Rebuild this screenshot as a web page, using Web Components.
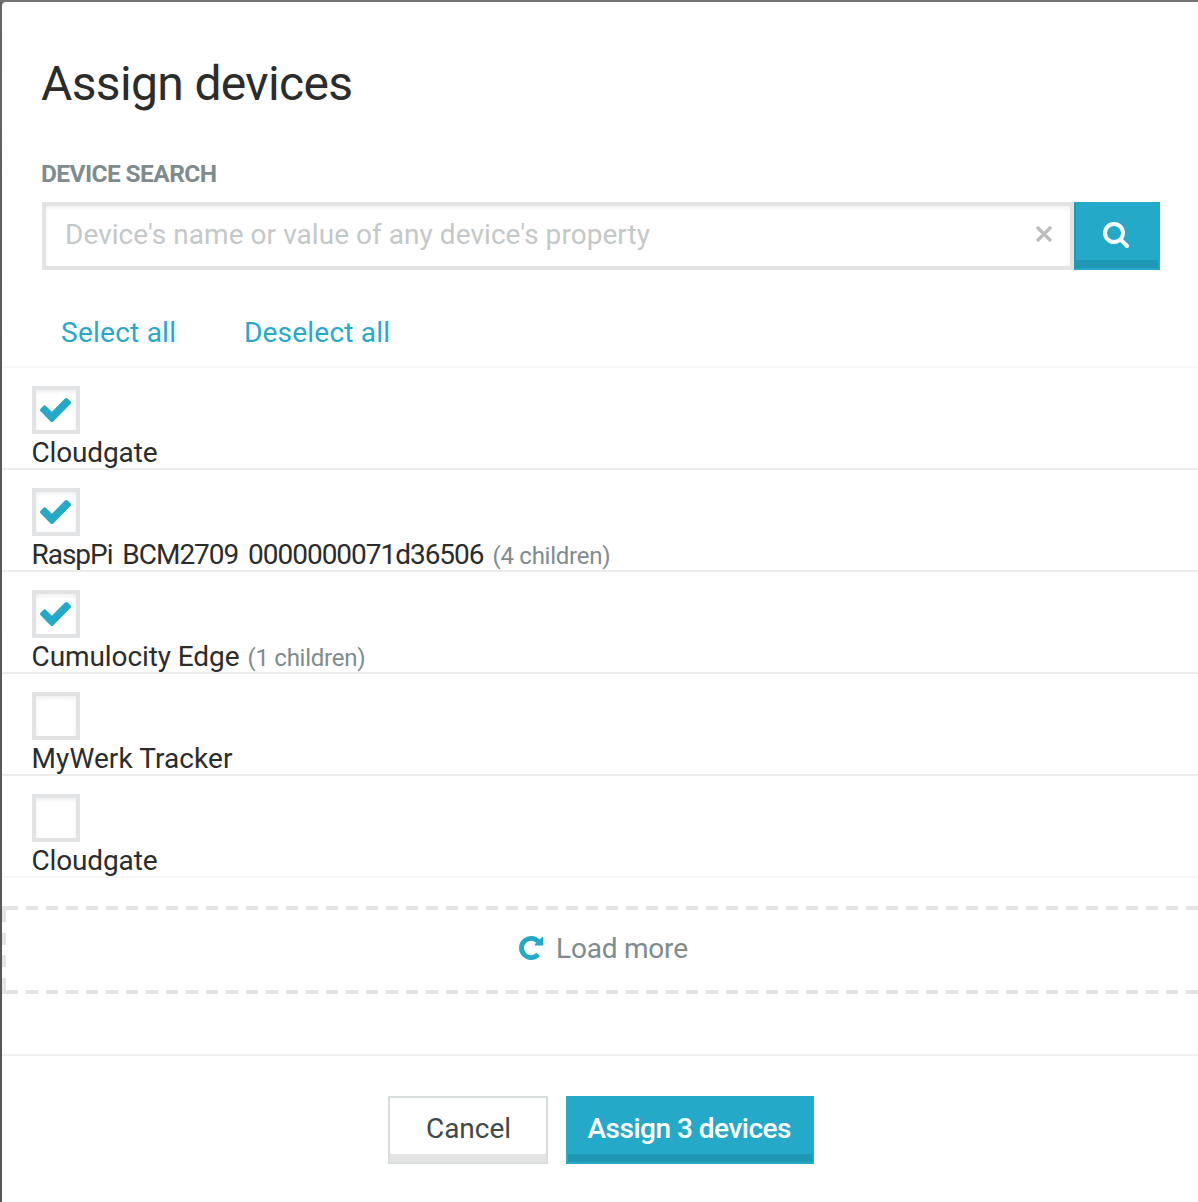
<!DOCTYPE html>
<html lang="en">
<head>
<meta charset="utf-8">
<title>Assign devices</title>
<style>
html, body { margin: 0; height: 100%; overflow: hidden; }
body { background: linear-gradient(#757475, #757475) 0 0 / 100% 2px no-repeat, linear-gradient(#666, #5a5a5b 30%, #565657); font-family: Roboto, "Liberation Sans", sans-serif; color: #2c2c2c; --brand: #24aac8; --brand-dark: #1f98b5; }
</style>
</head>
<body>
<assign-dialog></assign-dialog>
<script>
class BaseElement extends HTMLElement {
  constructor() {
    super();
    this.attachShadow({ mode: 'open' }).innerHTML = this.template();
  }
}

/* Single line of text tracked out to the width given in `w`. */
customElements.define('ui-text', class extends BaseElement {
  template() {
    return `<style>:host{display:inline-block;white-space:pre;line-height:34px;font-size:28px}span{display:inline-block}</style><span><slot></slot></span>`;
  }
  connectedCallback() {
    const span = this.shadowRoot.querySelector('span');
    const width = Number(this.getAttribute('w'));
    const gap = (width - span.getBoundingClientRect().width) / (this.textContent.length - 1);
    span.style.letterSpacing = gap + 'px';
    span.style.marginRight = -gap + 'px';
  }
});

customElements.define('search-field', class extends BaseElement {
  template() {
    return `<style>
      :host{display:flex;height:68px;width:1118px}
      .input{box-sizing:border-box;width:1032px;border:4px solid #e1e3e5;display:flex;align-items:center;justify-content:space-between;padding:0 17px 0 19px;box-shadow:inset 0 2px 4px #0000000f;color:#c5c8c8}
      ui-text{padding-bottom:2px}
      .clear{width:18px;height:18px;margin-top:-4px}
      .go{box-sizing:border-box;width:86px;background:var(--brand);border:2px solid var(--brand);border-left-color:var(--brand-dark);box-shadow:inset 0 -8px var(--brand-dark);display:flex;justify-content:center;padding-top:18px}
      .go svg{width:26px;height:26px;margin-right:2px}
    </style>
    <div class="input"><ui-text w="585">Device's name or value of any device's property</ui-text>
      <svg class="clear" viewBox="0 0 18 18"><path d="M2 2 16 16M16 2 2 16" stroke="#bcbcbc" stroke-width="3.3"/></svg></div>
    <div class="go"><svg viewBox="64 128 1664 1664"><path fill="#fff" d="M1216 832q0-185-131.5-316.5t-316.5-131.5-316.5 131.5-131.5 316.5 131.5 316.5 316.5 131.5 316.5-131.5 131.5-316.5zm512 832q0 52-38 90t-90 38q-54 0-90-38l-343-342q-179 124-399 124-143 0-273.5-55.5t-225-150-150-225-55.5-273.5 55.5-273.5 150-225 225-150 273.5-55.5 273.5 55.5 225 150 150 225 55.5 273.5q0 220-124 399l343 343q37 37 37 90z"/></svg></div>`;
  }
});

customElements.define('device-row', class extends BaseElement {
  template() {
    return `<style>
      :host{display:block;box-sizing:border-box;height:102px;padding:18px 0 0 30px;border-bottom:2px solid #ececec}
      :host(:last-of-type){border-color:#f6f6f6}
      .box{box-sizing:border-box;width:48px;height:48px;border:4px solid #e1e3e5;box-shadow:inset 0 2px 4px #00000012;display:flex;align-items:center;justify-content:center}
      svg{width:31px;height:24px;margin-right:2px;display:none}
      :host([checked]) svg{display:block}
      .name{display:flex;align-items:baseline;height:34px;padding-top:2px;gap:8px;margin-left:-.5px}
      ::slotted([slot=children]){font-size:24px;color:#7f8c8d}
    </style>
    <div class="box"><svg viewBox="121 334 1550 1188" preserveAspectRatio="none"><path fill="#24aac8" d="M1671 566q0 40-28 68l-724 724-136 136q-28 28-68 28t-68-28l-136-136-362-362q-28-28-28-68t28-68l136-136q28-28 68-28t68 28l294 295 656-657q28-28 68-28t68 28l136 136q28 28 28 68z"/></svg></div>
    <div class="name"><slot></slot><slot name="children"></slot></div>`;
  }
});

customElements.define('load-more', class extends BaseElement {
  template() {
    return `<style>
      :host{box-sizing:border-box;height:88px;display:flex;justify-content:center;align-items:center;color:#7f8c8d;gap:12px;padding:0 0 2px 2px;
        background:
        linear-gradient(#e4e4e4,#e4e4e4) 0 0/6px 4px no-repeat,
        linear-gradient(#e4e4e4,#e4e4e4) 0 100%/6px 4px no-repeat,
        linear-gradient(#e4e4e4 0 16px,#0000 16px 27px,#e4e4e4 27px 39px,#0000 39px 49px,#e4e4e4 49px 61px,#0000 61px 72px,#e4e4e4 72px) 0 0/4px 100% no-repeat,
        linear-gradient(90deg,#e4e4e4 12px,#0000 12px) 4px 0/20px 4px repeat-x,
        linear-gradient(90deg,#e4e4e4 12px,#0000 12px) 4px 100%/20px 4px repeat-x}
      svg{width:26px;height:26px;margin-bottom:2px}
    </style>
    <svg viewBox="518 935 26 26"><path d="M538.8 942.3A9.6 9.6 0 1 0 538.2 954.4" fill="none" stroke="#24aac8" stroke-width="4.8"/><path d="M543.3 937.2V945.6H535.3Q534.2 945.2 534.8 944.2L541.8 937.2Q542.8 936.4 543.3 937.2Z" fill="#24aac8"/></svg>
    <ui-text w="132">Load more</ui-text>`;
  }
});

customElements.define('ui-button', class extends BaseElement {
  template() {
    return `<style>
      :host{box-sizing:border-box;height:68px;width:160px;border:2px solid #d8dddd;box-shadow:inset 0 -8px #e4e4e4;display:flex;justify-content:center;padding:14px 0 0 1px;color:#40494a}
      :host([primary]){width:248px;padding:14px 1px 0 0;background:var(--brand);border-color:var(--brand);box-shadow:inset 0 -8px var(--brand-dark);color:#fff;font-weight:500}
    </style><slot></slot>`;
  }
});

customElements.define('assign-dialog', class extends BaseElement {
  template() {
    return `<style>
      :host{display:flex;flex-direction:column;box-sizing:border-box;width:1200px;height:1220px;margin:2px 0 0 2px;background:#fff;border-radius:4px 0 0 0}
      header{height:366px;box-sizing:border-box;border-bottom:2px solid #f6f6f6;padding:51px 0 0 39px}
      h1,label{display:block;margin:0;font-weight:400}
      h1 ui-text{font-size:48px;line-height:62px}
      label{height:34px;margin-top:42px;color:#7f8c8d;font-weight:700}
      label ui-text{font-size:24.5px}
      search-field{margin:11px 0 0 1px}
      nav{display:flex;gap:68px;padding:46px 0 0 20px;color:var(--brand)}
      load-more{margin-top:28px;flex:none}
      device-row{flex:none}
      .serial{word-spacing:4px}
      footer{margin-top:60px;border-top:2px solid #f2f2f2;padding-top:40px;display:flex;justify-content:center;gap:18px;padding-right:2px}
    </style>
    <header>
      <h1><ui-text w="312">Assign devices</ui-text></h1>
      <label><ui-text w="176">DEVICE SEARCH</ui-text></label>
      <search-field></search-field>
      <nav><ui-text w="115">Select all</ui-text><ui-text w="146">Deselect all</ui-text></nav>
    </header>
    <device-row checked><ui-text w="126">Cloudgate</ui-text></device-row>
    <device-row checked><ui-text class="serial" w="453">RaspPi BCM2709 0000000071d36506</ui-text><ui-text slot="children" w="118">(4 children)</ui-text></device-row>
    <device-row checked><ui-text w="208">Cumulocity Edge</ui-text><ui-text slot="children" w="118">(1 children)</ui-text></device-row>
    <device-row><ui-text w="201">MyWerk Tracker</ui-text></device-row>
    <device-row><ui-text w="126">Cloudgate</ui-text></device-row>
    <load-more></load-more>
    <footer><ui-button><ui-text w="85">Cancel</ui-text></ui-button><ui-button primary><ui-text w="204">Assign 3 devices</ui-text></ui-button></footer>`;
  }
});
</script>
</body>
</html>
